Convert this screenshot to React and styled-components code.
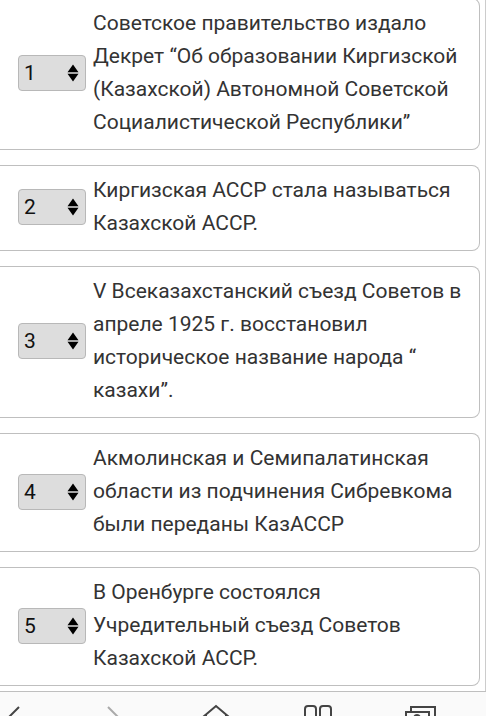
import { useState } from "react";
import styled, { createGlobalStyle } from "styled-components";

const events = [
  "Советское правительство издало Декрет “Об образовании Киргизской (Казахской) Автономной Советской Социалистической Республики”",
  "Киргизская АССР стала называться Казахской АССР.",
  "V Всеказахстанский съезд Советов в апреле 1925 г. восстановил историческое название народа “ казахи”.",
  "Акмолинская и Семипалатинская области из подчинения Сибревкома были переданы КазАССР",
  "В Оренбурге состоялся Учредительный съезд Советов Казахской АССР.",
];

const EventCard = ({ text, index }) => {
  const [order, setOrder] = useState(index + 1);
  const id = `order-${index}`;

  return (
    <Card>
      <SelectBox>
        <Select
          id={id}
          value={order}
          onChange={(e) => setOrder(Number(e.target.value))}
        >
          {events.map((_, i) => (
            <option key={i} value={i + 1}>
              {i + 1}
            </option>
          ))}
        </Select>
        <Arrows viewBox="0 0 12 18" aria-hidden="true">
          <path d="M6 0.500L11.500 8.300H0.500ZM0.500 9.700H11.500L6 17.500Z" />
        </Arrows>
      </SelectBox>
      <Label htmlFor={id}>{text}</Label>
    </Card>
  );
};

const App = () => {
  return (
    <Page>
      <GlobalStyle />
      <List>
        {events.map((text, index) => (
          <EventCard key={index} text={text} index={index} />
        ))}
      </List>
      <NavBar>
        <NavButton type="button" aria-label="Назад">
          <svg viewBox="0 0 32 32">
            <path d="M19 4L7 16L19 28" />
          </svg>
        </NavButton>
        <NavButton type="button" aria-label="Вперёд" $muted>
          <svg viewBox="0 0 32 32">
            <path d="M7 4L19 16L7 28" />
          </svg>
        </NavButton>
        <NavButton type="button" aria-label="Домой">
          <svg viewBox="0 0 32 32">
            <path d="M1 14L14 3L27 14M4 12V28H24V12" />
          </svg>
        </NavButton>
        <NavButton type="button" aria-label="Закладки">
          <svg viewBox="0 0 32 32">
            <path d="M2 28V6Q2 3 5 3H10Q13 3 13 6V28M17 28V6Q17 3 20 3H25Q28 3 28 6V28M2 26H28" />
          </svg>
        </NavButton>
        <NavButton type="button" aria-label="Вкладки">
          <svg viewBox="0 0 32 32">
            <path d="M7 9V4H31V24H26M2 9H25V28H2ZM10 16Q10 12 13 12T16 16" />
          </svg>
        </NavButton>
      </NavBar>
    </Page>
  );
};

const GlobalStyle = createGlobalStyle`
  * {
    box-sizing: border-box;
  }
  body {
    margin: 0;
    background: #fff;
    color: #333;
    font-family: Roboto, sans-serif;
  }
`;

const Page = styled.div`
  height: 100vh;
  overflow: hidden;
`;

const List = styled.main`
  display: flex;
  flex-direction: column;
  gap: 15px;
  margin-top: -2px;
  padding: 0 5px 5px 0;
  border-right: 1px solid #ccc;
`;

const Card = styled.section`
  display: flex;
  align-items: center;
  gap: 7px;
  padding: 8px 16px 10px 18px;
  border: 1px solid #bfbfbf;
  border-left: none;
  border-radius: 0 8px 8px 0;
`;

const SelectBox = styled.div`
  position: relative;
  flex: none;
  width: 68px;
`;

const Select = styled.select`
  display: block;
  appearance: none;
  width: 100%;
  height: 36px;
  padding: 0 5px;
  border: 1px solid #b8b8b8;
  border-radius: 4px;
  background: #ddd;
  color: #111;
  font-family: inherit;
  font-size: 21px;
`;

const Arrows = styled.svg`
  position: absolute;
  top: 9px;
  right: 7px;
  width: 12px;
  height: 18px;
  fill: #000;
  pointer-events: none;
`;

const Label = styled.label`
  flex: 1;
  font-size: 21px;
  line-height: 33px;
`;

const NavBar = styled.nav`
  display: flex;
  justify-content: space-between;
  height: 56px;
  padding: 11px 50px 0 0;
  border-top: 1px solid #bfbfbf;
  background: #fafafa;
`;

const NavButton = styled.button`
  width: 32px;
  height: 32px;
  padding: 0;
  border: none;
  background: none;
  color: ${(props) => (props.$muted ? "#aaa" : "#444")};

  svg {
    display: block;
    width: 100%;
    height: 100%;
    fill: none;
    stroke: currentColor;
    stroke-width: 2;
  }
`;

export default App;
